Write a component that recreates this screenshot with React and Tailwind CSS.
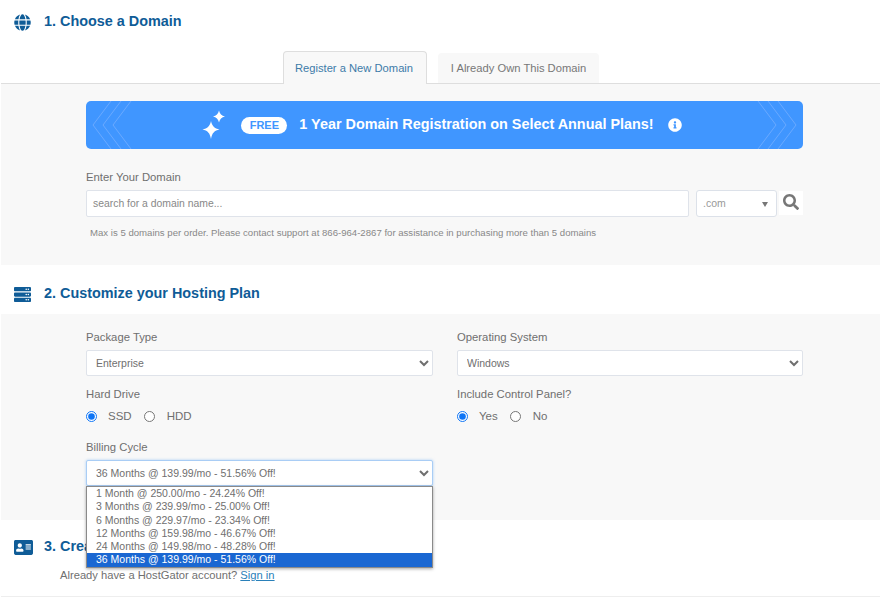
import { FaGlobe, FaServer, FaAddressCard, FaInfoCircle, FaSearch } from "react-icons/fa";

const billing = [
    "1 Month @ 250.00/mo - 24.24% Off!",
    "3 Months @ 239.99/mo - 25.00% Off!",
    "6 Months @ 229.97/mo - 23.34% Off!",
    "12 Months @ 159.98/mo - 46.67% Off!",
    "24 Months @ 149.98/mo - 48.28% Off!",
    "36 Months @ 139.99/mo - 51.56% Off!",
];

const SectionHead = ({ icon, title, className }) => (
    <div className={`flex items-center text-[#0f5c97] ${className}`}>
        <div className="w-[44px] pl-[14px] text-[17px] shrink-0">{icon}</div>
        <h2 className="text-[14.400px] font-bold">{title}</h2>
    </div>
);

const Chevrons = ({ flip }) => (
    <svg viewBox="0 0 46 48" className={`absolute top-0 h-12 w-[46px] ${flip ? "right-0 -scale-x-100" : "left-0"}`} fill="none" stroke="#6aaaff" strokeWidth="1">
        <path d="M45 0 L27 24 L45 48" />
        <path d="M35 0 L17 24 L35 48" />
        <path d="M25 0 L7 24 L25 48" />
    </svg>
);

const Sparkles = () => (
    <svg viewBox="0 0 24 30" className="w-[24px] h-[30px]" fill="#fff">
        <path d="M15 .5c.8 3.600 2.600 5.400 6 6-3.400.8-5.200 2.600-6 6-.8-3.400-2.600-5.200-6-6 3.400-.6 5.200-2.400 6-6z" transform="translate(2 0)" />
        <path d="M9 11c1 5 3.500 7.500 8.500 8.500C12.500 20.500 10 23 9 29c-1-6-3.500-8.500-8.500-9.500C5.500 18.500 8 16 9 11z" />
    </svg>
);

const Select = ({ value, className = "" }) => (
    <select defaultValue={value} className={`w-full h-[26px] mt-[6px] bg-white border border-[#dfe3ea] rounded-[2px] pl-[5px] text-[10.500px] text-[#6f6f6f] ${className}`}>
        <option>{value}</option>
    </select>
);

const Radios = ({ first, second, name }) => (
    <div className="flex items-center h-[20px] text-[11.500px] text-[#6f6f6f]">
        <input type="radio" name={name} defaultChecked className="w-[11px] h-[11px] m-0 accent-[#0f75f5]" />
        <span className="ml-[11px] mt-[2px]">{first}</span>
        <input type="radio" name={name} className="w-[11px] h-[11px] m-0 ml-[12px]" />
        <span className="ml-[12px] mt-[2px]">{second}</span>
    </div>
);

const Label = ({ children }) => (
    <label className="block h-[14px] leading-[14px] text-[11.300px] text-[#6f6f6f]">{children}</label>
);

const App = () => {
    return (
        <div className="w-[880px] h-[597px] overflow-hidden bg-white font-['Liberation_Sans',Arial,sans-serif]">
            <SectionHead icon={<FaGlobe />} title="1. Choose a Domain" className="h-[42px] pt-[2px]" />

            {/* tabs */}
            <div className="h-[42px] ml-px flex items-end border-b border-[#dedede] pl-[282px] text-[11.200px]">
                <div className="h-[33px] w-[144px] -mb-px pr-[2px] flex items-center justify-center bg-[#f8f8f8] border border-b-0 border-[#dedede] rounded-t-[4px] text-[#3d7ba8]">
                    Register a New Domain
                </div>
                <div className="h-[30px] w-[161px] ml-[11px] flex items-center justify-center bg-[#f8f8f8] rounded-t-[4px] text-[#777]">
                    I Already Own This Domain
                </div>
            </div>

            <div className="h-[181px] ml-px bg-[#f8f8f8] pl-[85px] pr-[77px] pt-[17px]">
                <div className="relative h-12 pr-[5px] bg-[#4096ff] rounded-[5px] overflow-hidden flex items-center justify-center text-white">
                    <Chevrons />
                    <Chevrons flip />
                    <div className="mr-[15px]"><Sparkles /></div>
                    <span className="w-[46px] h-[17px] mr-[12px] bg-white rounded-full text-[#4096ff] text-[11px] font-bold flex items-center justify-center">FREE</span>
                    <span className="text-[14.400px] font-bold">1 Year Domain Registration on Select Annual Plans!</span>
                    <FaInfoCircle className="ml-[14px] text-[14px]" />
                </div>

                <div className="mt-[21px]"><Label>Enter Your Domain</Label></div>
                <div className="flex mt-[6px]">
                    <input placeholder="search for a domain name..." className="w-[603px] h-[27px] bg-white border border-[#dfe3ea] rounded-[2px] px-[6px] text-[10.400px] placeholder:text-[#888]" />
                    <div className="relative w-[81px] h-[27px] ml-[7px] bg-white border border-[#dce1e9] rounded-[3px] pl-[6px] flex items-center text-[10.500px] text-[#999]">
                        .com
                        <span className="absolute right-[8px] top-[11px] border-x-[3px] border-x-transparent border-t-[5px] border-t-[#777]"></span>
                    </div>
                    <div className="w-[24px] h-[24px] ml-[2px] mt-px pb-[2px] pr-[1px] bg-white text-[#777] text-[16px] flex items-center justify-center">
                        <FaSearch />
                    </div>
                </div>
                <p className="mt-[10px] pl-[4px] text-[9.600px] leading-[12px] text-[#888]">
                    Max is 5 domains per order. Please contact support at 866-964-2867 for assistance in purchasing more than 5 domains
                </p>
            </div>

            <SectionHead icon={<FaServer />} title="2. Customize your Hosting Plan" className="h-[49px] pt-[9px]" />

            <div className="h-[206px] ml-px bg-[#f8f8f8] pl-[85px] pr-[77px] pt-[16px]">
                <div className="grid grid-cols-[347px_346px] gap-x-[24px]">
                    <div>
                        <Label>Package Type</Label>
                        <Select value="Enterprise" />
                    </div>
                    <div>
                        <Label>Operating System</Label>
                        <Select value="Windows" />
                    </div>
                    <div className="mt-[11px]">
                        <Label>Hard Drive</Label>
                        <div className="mt-[5px]"><Radios first="SSD" second="HDD" name="drive" /></div>
                    </div>
                    <div className="mt-[11px]">
                        <Label>Include Control Panel?</Label>
                        <div className="mt-[5px]"><Radios first="Yes" second="No" name="panel" /></div>
                    </div>
                    <div className="relative mt-[14px]">
                        <Label>Billing Cycle</Label>
                        <Select value={billing[5]} className="!border-[#a9cdf5] shadow-[0_0_3px_rgba(120,180,245,0.6)]" />
                        {/* open dropdown list */}
                        <ul className="absolute z-10 left-0 top-[46px] w-[347px] bg-white border border-[#8a8a8a] shadow-[0_1px_3px_rgba(0,0,0,0.35)] text-[10.500px] text-[#6f6f6f] leading-[13.300px]">
                            {billing.map((item, index) => (
                                <li key={item} className={`pl-[9px] h-[13.300px] ${index === 5 ? "bg-[#1a67d2] text-white" : ""}`}>{item}</li>
                            ))}
                        </ul>
                    </div>
                </div>
            </div>

            <SectionHead icon={<FaAddressCard className="text-[19px]" />} title="3. Create Your Account" className="h-[48px] pt-[6px]" />
            <p className="ml-[60px] text-[11.200px] leading-[14px] text-[#6f6f6f]">
                Already have a HostGator account? <a className="text-[#2a80b9] underline">Sign in</a>
            </p>
            <div className="mt-[14px] ml-px border-t border-[#eee]"></div>
        </div>
    );
};

export default App;
